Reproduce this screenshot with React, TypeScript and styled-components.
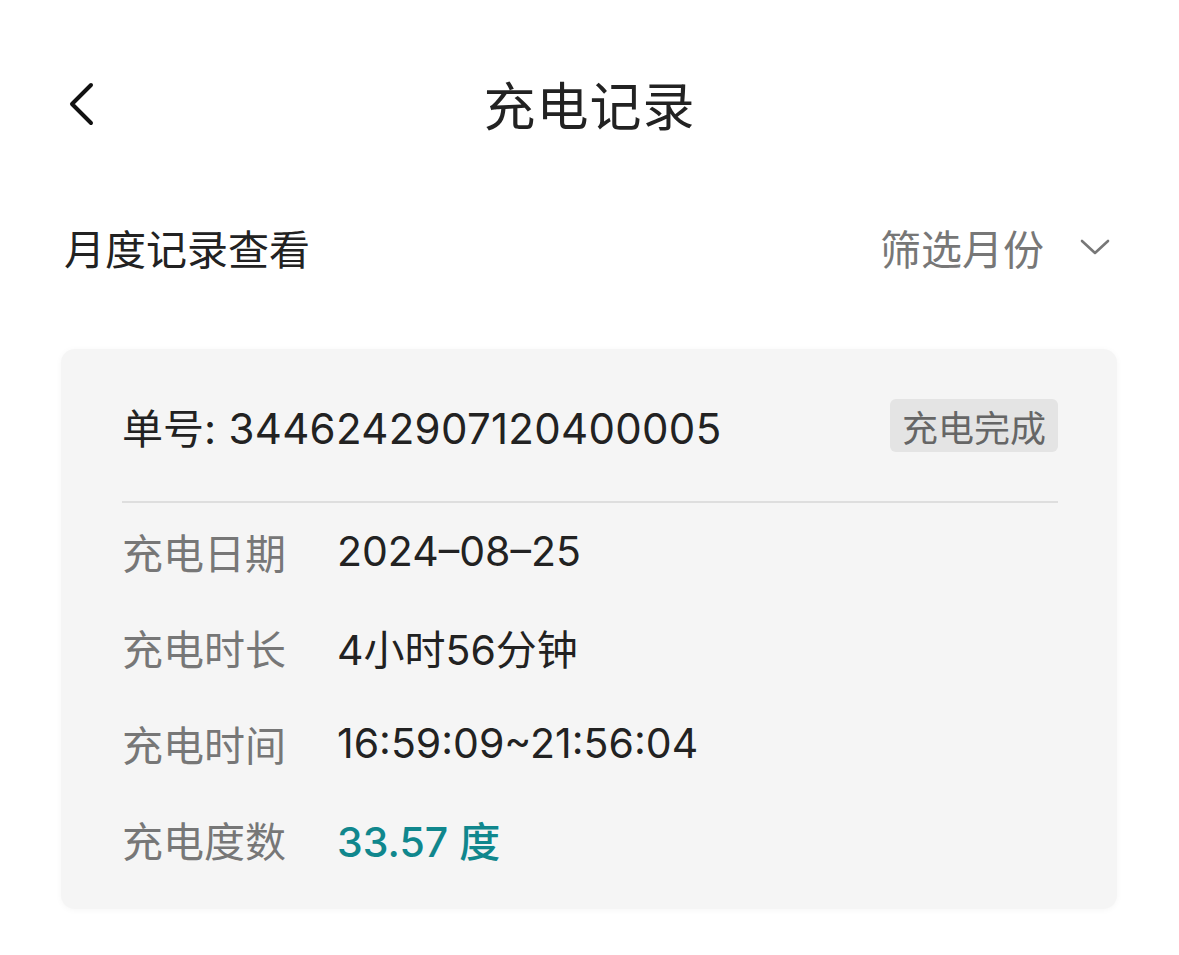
import React from 'react';
import styled, { createGlobalStyle } from 'styled-components';

const GlobalStyle = createGlobalStyle`
  html, body {
    margin: 0;
    padding: 0;
    background: #ffffff;
  }
  body {
    font-family: Inter, "Noto Sans CJK SC", sans-serif;
    color: #222;
  }
`;

const Page = styled.div`
  width: 1179px;
  min-height: 955px;
  background: #fff;
`;

const NavBar = styled.header`
  height: 206px;
  display: grid;
  grid-template-columns: 1fr auto 1fr;
  align-items: center;
`;

const BackButton = styled.button`
  justify-self: start;
  margin-left: 66px;
  margin-top: 2px;
  padding: 0;
  border: none;
  background: none;
  display: flex;
  cursor: pointer;
`;

const Title = styled.h1`
  margin: 0;
  font-family: "Noto Sans CJK SC", sans-serif;
  font-size: 52px;
  font-weight: 400;
  color: #222;
  letter-spacing: 1px;
`;

const FilterBar = styled.div`
  height: 82px;
  padding: 0 69px 0 64px;
  display: flex;
  align-items: center;
  justify-content: space-between;
  margin-bottom: 61px;
`;

const SectionTitle = styled.div`
  font-family: "Noto Sans CJK SC", sans-serif;
  font-size: 41px;
  color: #222;
`;

const MonthPicker = styled.div`
  display: flex;
  align-items: center;
  gap: 36px;
  font-family: "Noto Sans CJK SC", sans-serif;
  font-size: 41px;
  color: #777;
`;

const Card = styled.section`
  margin: 0 62px 0 61px;
  padding: 50px 59px 22px 61px;
  background: #f5f5f5;
  border-radius: 14px;
  box-shadow: 0 1px 6px rgba(0, 0, 0, 0.04);
`;

const OrderRow = styled.div`
  height: 53px;
  display: flex;
  align-items: center;
  justify-content: space-between;
  padding-bottom: 49px;
  border-bottom: 2px solid #dedede;
  box-sizing: content-box;
`;

const OrderNo = styled.div`
  font-size: 42px;
  letter-spacing: 0.3px;
  color: #222;
  font-family: Inter, "Noto Sans CJK SC", sans-serif;
`;

const OrderPrefix = styled.span`
  font-family: "Noto Sans CJK SC", sans-serif;
  font-size: 41px;
  letter-spacing: 0;
`;

const Badge = styled.span`
  height: 53px;
  padding: 0 12px;
  display: flex;
  align-items: center;
  background: #e4e4e4;
  border-radius: 6px;
  font-family: "Noto Sans CJK SC", sans-serif;
  font-size: 36px;
  color: #666;
`;

const InfoRow = styled.div`
  height: 96px;
  display: flex;
  align-items: center;
`;

const Label = styled.span`
  width: 215px;
  flex-shrink: 0;
  font-family: "Noto Sans CJK SC", sans-serif;
  font-size: 41px;
  color: #777;
`;

const Value = styled.span<{ highlight?: boolean }>`
  font-family: Inter, "Noto Sans CJK SC", sans-serif;
  font-size: 41px;
  color: ${props => props.highlight ? '#10878d' : '#222'};
  font-weight: ${props => props.highlight ? 500 : 400};
`;

const rows = [
  { label: '充电日期', value: '2024–08–25' },
  { label: '充电时长', value: '4小时56分钟' },
  { label: '充电时间', value: '16:59:09~21:56:04' },
  { label: '充电度数', value: '33.57 度', highlight: true },
];

const App: React.FC = () => {
  return (
    <>
      <GlobalStyle />
      <Page>
        <NavBar>
          <BackButton aria-label="返回">
            <svg width="30" height="44" viewBox="0 0 30 44" fill="none">
              <path d="M25 3 L6 22 L25 41" stroke="#111" strokeWidth="4" strokeLinecap="round" strokeLinejoin="round" />
            </svg>
          </BackButton>
          <Title>充电记录</Title>
          <div />
        </NavBar>

        <FilterBar>
          <SectionTitle>月度记录查看</SectionTitle>
          <MonthPicker>
            筛选月份
            <svg width="30" height="18" viewBox="0 0 30 18" fill="none">
              <path d="M2 3 L15 15 L28 3" stroke="#777" strokeWidth="2.6" strokeLinecap="round" strokeLinejoin="round" />
            </svg>
          </MonthPicker>
        </FilterBar>

        <Card>
          <OrderRow>
            <OrderNo>
              <OrderPrefix>单号</OrderPrefix>: 3446242907120400005
            </OrderNo>
            <Badge>充电完成</Badge>
          </OrderRow>
          {rows.map((row) => (
            <InfoRow key={row.label}>
              <Label>{row.label}</Label>
              <Value highlight={row.highlight}>{row.value}</Value>
            </InfoRow>
          ))}
        </Card>
      </Page>
    </>
  );
};

export default App;
